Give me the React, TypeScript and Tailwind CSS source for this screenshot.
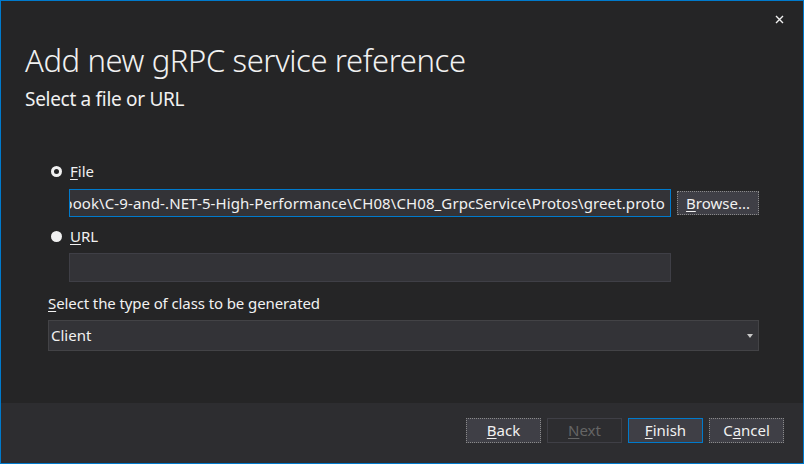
import React from 'react';

const font = "font-['Noto_Sans',sans-serif]";

function Radio({ checked }: { checked: boolean }) {
  return (
    <span className="flex h-[11px] w-[11px] items-center justify-center rounded-full bg-[#f1f1f1]">
      {checked && <span className="h-[5px] w-[5px] rounded-full bg-[#252526]" />}
    </span>
  );
}

function DialogButton({
  label,
  accessKey,
  variant = 'dotted',
  width = 'w-[75px] h-[25px]',
}: {
  label: string;
  accessKey: number;
  variant?: 'dotted' | 'disabled' | 'default';
  width?: string;
}) {
  const styles = {
    dotted: 'border border-dotted border-[#8a8a8a] bg-[#3f3f46] text-[#f1f1f1]',
    disabled: 'border border-[#3f3f46] bg-[#2d2d30] text-[#656565]',
    default: 'border border-[#007acc] bg-[#3f3f46] text-[#f1f1f1]',
  }[variant];
  return (
    <button type="button" className={`flex items-center justify-center text-[15px] ${width} ${styles}`}>
      {label.slice(0, accessKey)}
      <span className="underline underline-offset-2">{label[accessKey]}</span>
      {label.slice(accessKey + 1)}
    </button>
  );
}

export default function App() {
  return (
    <div className={`flex h-[464px] w-[804px] flex-col border border-[#007acc] bg-[#252526] text-[#f1f1f1] ${font}`}>
      <div className="relative flex-1">
        <button type="button" className="absolute right-[19px] top-[14px] text-[14px] leading-none text-[#f1f1f1]">
          <svg width="9" height="9" viewBox="0 0 9 9" stroke="currentColor" strokeWidth="1.4">
            <path d="M1 1L8 8M8 1L1 8" />
          </svg>
        </button>

        <div className="px-6 pt-[39px]">
          <h1 className="text-[31px] font-light leading-[40px] tracking-[-0.4px]">Add new gRPC service reference</h1>
          <p className="mt-[7px] text-[19px] leading-[24px] tracking-[-0.3px]">Select a file or URL</p>
        </div>

        <div className="flex flex-col pl-[47px] pr-[44px] pt-[50px] text-[15px]">
          <div className="flex items-center gap-[8px] pl-[3px]">
            <Radio checked />
            <span className="leading-[20px]">
              <span className="underline underline-offset-2">F</span>ile
            </span>
          </div>
          <div className="mt-[8px] flex items-center gap-[6px] pl-[21px]">
            <div className="flex h-[28px] w-[602px] items-center justify-end overflow-hidden whitespace-nowrap border border-[#007acc] bg-[#333337] pr-[5px] text-[15px] tracking-[0.1px]">
              book\C-9-and-.NET-5-High-Performance\CH08\CH08_GrpcService\Protos\greet.proto
            </div>
            <DialogButton label="Browse..." accessKey={0} width="w-[82px] h-[24px]" />
          </div>

          <div className="mt-[9px] flex items-center gap-[8px] pl-[3px]">
            <Radio checked={false} />
            <span className="leading-[20px]">
              <span className="underline underline-offset-2">U</span>RL
            </span>
          </div>
          <div className="mt-[7px] pl-[21px]">
            <div className="h-[29px] w-[602px] border border-[#3f3f46] bg-[#333337]" />
          </div>

          <p className="mt-[11px] leading-[20px] tracking-[-0.1px]">
            <span className="underline underline-offset-2">S</span>elect the type of class to be generated
          </p>
          <div className="mt-[7px] flex h-[31px] items-center justify-between border border-[#434346] bg-[#333337] pl-[2px] pr-[5px]">
            <span className="text-[15px]">Client</span>
            <svg width="6" height="4" viewBox="0 0 6 4" fill="#c8c8c8">
              <path d="M0 0H6L3 4Z" />
            </svg>
          </div>
        </div>
      </div>

      <div className="flex h-[60px] items-start justify-end gap-[6px] bg-[#2d2d30] pr-[19px] pt-[15px]">
        <DialogButton label="Back" accessKey={0} />
        <DialogButton label="Next" accessKey={0} variant="disabled" />
        <DialogButton label="Finish" accessKey={0} variant="default" />
        <DialogButton label="Cancel" accessKey={1} />
      </div>
    </div>
  );
}
